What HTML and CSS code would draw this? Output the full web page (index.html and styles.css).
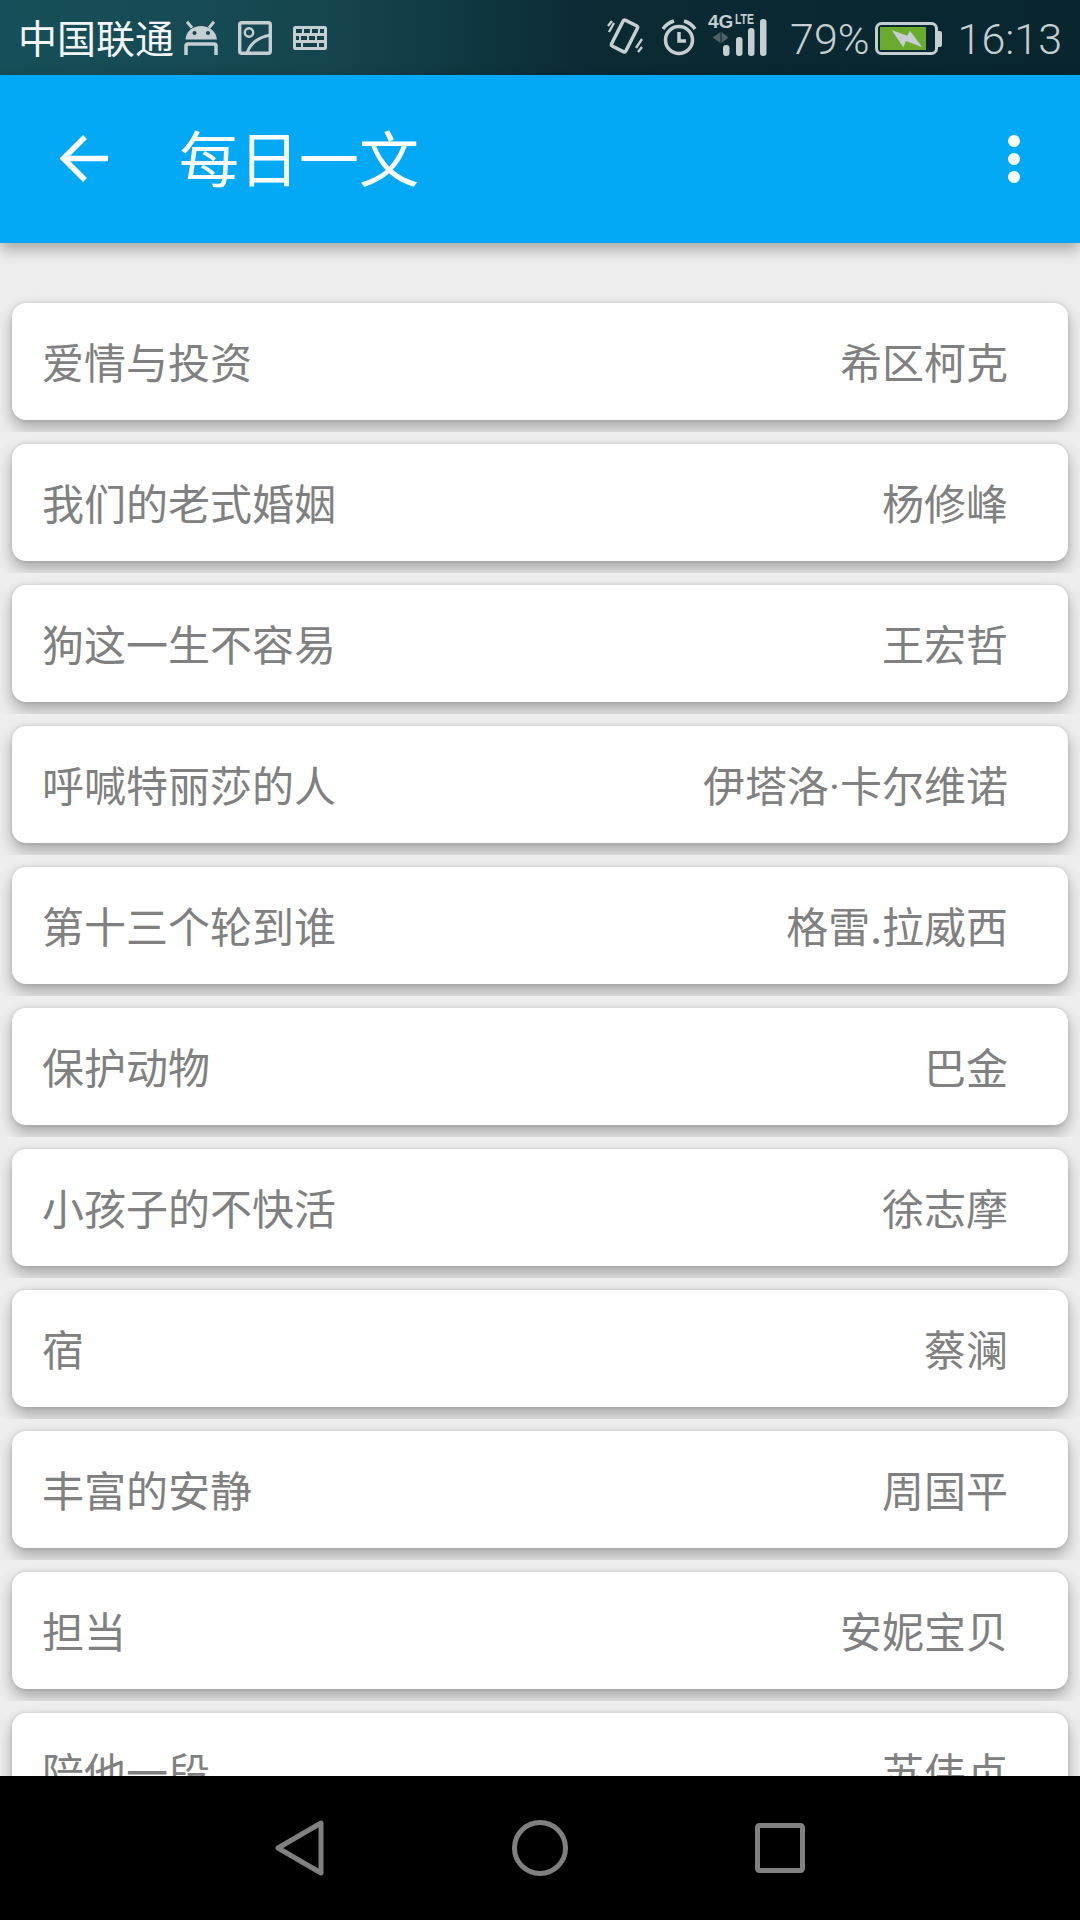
FILE: index.html
```html
<!DOCTYPE html>
<html lang="zh-CN">
<head>
    <meta charset="UTF-8">
    <meta name="viewport" content="width=device-width, initial-scale=1.0">
    <title>每日一文</title>
    <link rel="stylesheet" href="styles.css">
</head>
<body>
    <div class="phone">
        <!-- 状态栏 -->
        <div class="status-bar">
            <div class="status-left">
                <span class="carrier">中国联通</span>
                <svg class="ic-android" width="36" height="36" viewBox="0 0 36 36">
                    <path d="M2.500 19.500C3 11 10 6 18 6S33 11 34 19.500z" fill="#c5ced1"/>
                    <path d="M4 1.700l5 6M31 1.700l-5 6" stroke="#c5ced1" stroke-width="3" fill="none"/>
                    <circle cx="11.500" cy="13" r="2" fill="#17454e"/>
                    <circle cx="25" cy="13" r="2" fill="#17454e"/>
                    <path d="M3 35V26a2 2 0 0 1 2-2h26a2 2 0 0 1 2 2v9" stroke="#c5ced1" stroke-width="3.500" fill="none"/>
                </svg>
                <svg class="ic-image" width="34" height="34" viewBox="0 0 34 34">
                    <rect x="1.700" y="1.700" width="30.600" height="30.600" rx="2" stroke="#c5ced1" stroke-width="3.400" fill="none"/>
                    <circle cx="11" cy="11.500" r="4.200" stroke="#c5ced1" stroke-width="2.400" fill="none"/>
                    <path d="M9 33C11 24 19 16 33 14" stroke="#c5ced1" stroke-width="3" fill="none"/>
                </svg>
                <svg class="ic-keyboard" width="34" height="24" viewBox="0 0 34 24">
                    <rect width="34" height="24" rx="2.500" fill="#c5ced1"/>
                    <path d="M3 3h6v4H3zM11 3h6v4h-6zM19 3h6v4h-6zM27 3h4v4h-4zM3 10h3v4H3zM8 10h6v4H8zM16 10h6v4h-6zM24 10h7v4h-7zM3 17h5v4H3zM26 17h5v4h-5zM10 17h14v4H10z" fill="#14404a"/>
                </svg>
            </div>
            <div class="status-right">
                <svg class="ic-vibrate" width="38" height="38" viewBox="0 0 38 38">
                    <rect x="10.500" y="4.500" width="16" height="29" rx="2" transform="rotate(27 18.500 19)" stroke="#c5ced1" stroke-width="3.500" fill="none"/>
                    <path d="M2 9l4-5M3 15l5-9M30 31l6-9M32 35l4-5" stroke="#c5ced1" stroke-width="2.400" fill="none"/>
                </svg>
                <svg class="ic-alarm" width="38" height="38" viewBox="0 0 38 38">
                    <circle cx="18" cy="21" r="13.500" stroke="#c5ced1" stroke-width="3.500" fill="none"/>
                    <path d="M18 13v9h7" stroke="#c5ced1" stroke-width="3.500" fill="none"/>
                    <path d="M2 10Q6 4 13 2M34 10Q30 4 23 2" stroke="#c5ced1" stroke-width="3.500" fill="none"/>
                </svg>
                <svg class="ic-signal" width="62" height="44" viewBox="0 0 62 44">
                    <text x="2" y="16" class="sig-4g">4G</text>
                    <text x="29" y="12" class="sig-lte" textLength="19" lengthAdjust="spacingAndGlyphs">LTE</text>
                    <path d="M14.500 20l-8 5.500 8 5.500zM15.500 20l7 5.500-7 5.500z" fill="#4f6166"/>
                    <rect x="17" y="33" width="6.500" height="11" rx="3" fill="#c5ced1"/>
                    <rect x="30" y="25" width="6.500" height="19" rx="3" fill="#c5ced1"/>
                    <rect x="42" y="16" width="6.500" height="28" rx="3" fill="#c5ced1"/>
                    <rect x="54" y="7" width="6.500" height="37" rx="3" fill="#c5ced1"/>
                </svg>
                <span class="percent">79%</span>
                <svg class="ic-battery" width="68" height="33" viewBox="0 0 68 33">
                    <rect x="1.500" y="1.500" width="60" height="30" rx="5" stroke="#c5ced1" stroke-width="3" fill="none"/>
                    <rect x="5" y="5" width="46" height="23" fill="#6aab2e"/>
                    <path d="M63 9h2a2 2 0 0 1 2 2v12a2 2 0 0 1-2 2h-2z" fill="#c5ced1"/>
                    <path d="M16.700 8L32.300 13.700 35 8.700 47.300 25.300 31 19 28.300 25.300z" fill="#c5ced1"/>
                </svg>
                <span class="clock">16:13</span>
            </div>
        </div>

        <!-- 标题栏 -->
        <header class="toolbar">
            <svg class="back" width="50" height="50" viewBox="0 0 50 50">
                <path d="M48 24.500H5M25 3L3.500 24.500 25 46" stroke="#fff" stroke-width="5.500" fill="none"/>
            </svg>
            <h1 class="title">每日一文</h1>
            <div class="more"><i></i><i></i><i></i></div>
        </header>

        <!-- 文章列表 -->
        <div class="list">
            <div class="item"><div class="card"><span>爱情与投资</span><span>希区柯克</span></div></div>
            <div class="item"><div class="card"><span>我们的老式婚姻</span><span>杨修峰</span></div></div>
            <div class="item"><div class="card"><span>狗这一生不容易</span><span>王宏哲</span></div></div>
            <div class="item"><div class="card"><span>呼喊特丽莎的人</span><span>伊塔洛<span class="dot">·</span>卡尔维诺</span></div></div>
            <div class="item"><div class="card"><span>第十三个轮到谁</span><span>格雷.拉威西</span></div></div>
            <div class="item"><div class="card"><span>保护动物</span><span>巴金</span></div></div>
            <div class="item"><div class="card"><span>小孩子的不快活</span><span>徐志摩</span></div></div>
            <div class="item"><div class="card"><span>宿</span><span>蔡澜</span></div></div>
            <div class="item"><div class="card"><span>丰富的安静</span><span>周国平</span></div></div>
            <div class="item"><div class="card"><span>担当</span><span>安妮宝贝</span></div></div>
            <div class="item"><div class="card"><span>陪他一段</span><span>苏伟贞</span></div></div>
        </div>

        <!-- 导航栏 -->
        <nav class="nav-bar">
            <svg width="50" height="56" viewBox="0 0 50 56">
                <path d="M46 3L3 28l43 25z" stroke="#808080" stroke-width="5" stroke-linejoin="round" fill="none"/>
            </svg>
            <svg width="56" height="56" viewBox="0 0 56 56">
                <circle cx="28" cy="28" r="25.500" stroke="#808080" stroke-width="5" fill="none"/>
            </svg>
            <svg width="50" height="50" viewBox="0 0 50 50">
                <rect x="2.500" y="2.500" width="45" height="45" rx="2" stroke="#808080" stroke-width="5" fill="none"/>
            </svg>
        </nav>
    </div>
</body>
</html>
```

FILE: styles.css
```css
:root {
    --primary-color: #03a9f4;
    --text-color: #808080;
    --icon-color: #c5ced1;
}

* {
    box-sizing: border-box;
}

body {
    margin: 0;
    font-family: "Noto Sans CJK SC", "Liberation Sans", sans-serif;
}

.phone {
    width: 1080px;
    height: 1920px;
    display: flex;
    flex-direction: column;
    overflow: hidden;
    background: #eeeeee;
}

/* 状态栏 */
.status-bar {
    height: 75px;
    flex: none;
    display: flex;
    justify-content: space-between;
    align-items: center;
    padding: 0 18px 0 18px;
    background: linear-gradient(90deg, #17505a 0%, #154650 30%, #0a2a34 55%, #09262f 100%);
}

.status-left,
.status-right {
    display: flex;
    align-items: center;
}

.carrier {
    font-size: 39px;
    line-height: 73px;
    padding-bottom: 2px;
    color: #f2f5f5;
}

.ic-android {
    margin-left: 9px;
}

.ic-image {
    margin-left: 19px;
}

.ic-keyboard {
    margin-left: 21px;
}

.ic-vibrate {
    margin-bottom: 3px;
}

.ic-alarm {
    margin-left: 17px;
}

.ic-signal {
    margin-left: 7px;
    margin-bottom: 7px;
}

.sig-4g {
    font: bold 19px "Liberation Sans", sans-serif;
    fill: var(--icon-color);
}

.sig-lte {
    font: bold 14px "Liberation Sans", sans-serif;
    fill: var(--icon-color);
}

.percent,
.clock {
    font-family: Roboto, sans-serif;
    font-weight: 300;
    font-size: 43px;
    line-height: 71px;
    padding-top: 4px;
    color: var(--icon-color);
}

.percent {
    margin-left: 22px;
}

.ic-battery {
    margin-left: 5px;
    margin-top: 2px;
}

.clock {
    margin-left: 15px;
}

/* 标题栏 */
.toolbar {
    position: relative;
    z-index: 2;
    height: 168px;
    flex: none;
    display: flex;
    align-items: center;
    padding: 0 60px 0 60px;
    background: var(--primary-color);
    box-shadow: 0 6px 15px rgba(0, 0, 0, 0.32);
}

.back {
    flex: none;
}

.title {
    margin: 0 0 0 69px;
    padding-bottom: 7px;
    flex: 1;
    font-size: 60px;
    font-weight: 400;
    color: #fff;
}

.more {
    display: flex;
    flex-direction: column;
    gap: 6px;
}

.more i {
    width: 12px;
    height: 12px;
    border-radius: 50%;
    background: #fff;
}

/* 列表 */
.list {
    flex: 1;
    min-height: 0;
    padding-top: 48px;
    overflow: hidden;
}

.item {
    height: 141px;
    padding: 12px;
    overflow: hidden;
}

.card {
    height: 117px;
    display: flex;
    justify-content: space-between;
    align-items: center;
    padding: 0 60px 2px 30px;
    background: #fff;
    border-radius: 14px;
    box-shadow: 0 8px 16px rgba(0, 0, 0, 0.3), 0 0 4px rgba(0, 0, 0, 0.12);
    font-size: 42px;
    color: var(--text-color);
}

.dot {
    font-family: Roboto, sans-serif;
}

/* 导航栏 */
.nav-bar {
    height: 144px;
    flex: none;
    display: flex;
    align-items: center;
    justify-content: center;
    gap: 187px;
    background: #000;
}
```
